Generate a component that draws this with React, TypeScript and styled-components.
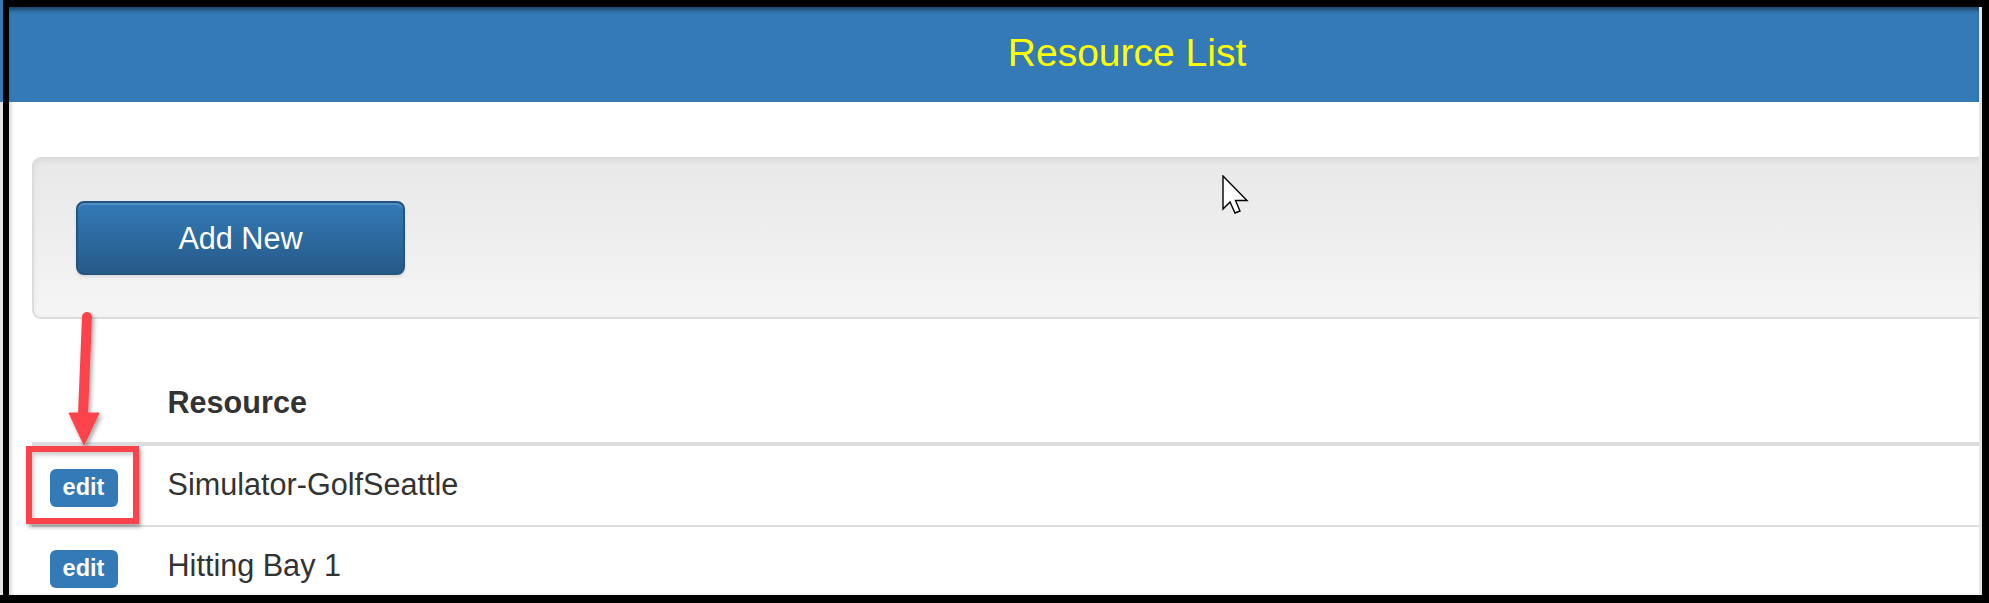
import React from "react";
import styled, { createGlobalStyle } from "styled-components";

const resources = ["Simulator-GolfSeattle", "Hitting Bay 1"];

const GlobalStyle = createGlobalStyle`
  html, body {
    margin: 0;
    padding: 0;
    background: #000;
  }
  body {
    font-family: "Liberation Sans", Arial, sans-serif;
    color: #333;
  }
`;

function App() {
  return (
    <>
      <GlobalStyle />
      <Frame>
        <Screen>
          <Header>
            <HeaderTitle>Resource List</HeaderTitle>
          </Header>
          <Content>
            <Well>
              <AddButton>Add New</AddButton>
            </Well>
            <Table>
              <Row $head>
                <Cell />
                <HeadCell>Resource</HeadCell>
              </Row>
              {resources.map((name) => (
                <Row key={name}>
                  <Cell>
                    <EditLabel>edit</EditLabel>
                  </Cell>
                  <Cell>{name}</Cell>
                </Row>
              ))}
            </Table>
          </Content>
          <CalloutArrow width="60" height="150" viewBox="0 0 60 150">
            <defs>
              <filter id="shade" x="-50%" y="-20%" width="200%" height="140%">
                <feDropShadow dx="2" dy="3" stdDeviation="2" floodColor="#000" floodOpacity="0.35" />
              </filter>
            </defs>
            <g filter="url(#shade)" fill="#fc434b" stroke="#fc434b">
              <path d="M28 10 L24 108" strokeWidth="10" strokeLinecap="round" fill="none" />
              <polygon points="10,106 40,106 25,138" strokeWidth="1" strokeLinejoin="round" />
            </g>
          </CalloutArrow>
          <CalloutBox />
          <Cursor width="28" height="40" viewBox="0 0 28 40">
            <polygon
              points="1,1 1,34 8,27 13,38 18,36 13.5,25.5 25,25.5"
              fill="#fff"
              stroke="#000"
              strokeWidth="1.4"
              strokeLinejoin="miter"
            />
          </Cursor>
        </Screen>
      </Frame>
    </>
  );
}

// black capture frame; a sliver of the captured page shows at the far left
const Frame = styled.div`
  box-sizing: border-box;
  width: 1989px;
  height: 603px;
  padding: 7px 7px 8px 9px;
  background:
    linear-gradient(#337ab7, #337ab7) 0 0 / 3px 102px no-repeat,
    linear-gradient(#e4e4e4, #e4e4e4) 0 102px / 3px 493px no-repeat,
    #000;
`;

const Screen = styled.div`
  position: relative;
  box-sizing: border-box;
  height: 588px;
  overflow: hidden;
  background: #fff;
  border-right: 3px solid #e6e6e6;
  box-shadow: inset 3px 0 3px rgba(0, 0, 0, 0.12);
`;

const Header = styled.div`
  display: flex;
  justify-content: center;
  align-items: center;
  height: 95px;
  padding-left: 266px;
  background: #337ab7;
  box-shadow: inset 0 5px 4px -2px rgba(0, 0, 0, 0.45);
`;

const HeaderTitle = styled.div`
  color: #ffff00;
  font-size: 39px;
  line-height: 1;
  margin-top: -4px;
`;

const Content = styled.div`
  padding: 55px 0 0 23px;
`;

const Well = styled.div`
  display: flex;
  align-items: center;
  height: 162px;
  box-sizing: border-box;
  margin-right: -20px;
  padding: 0 42px;
  border: 2px solid #dcdcdc;
  border-radius: 9px;
  background: linear-gradient(to bottom, #e8e8e8 0%, #f5f5f5 100%);
  box-shadow: inset 0 2px 6px rgba(0, 0, 0, 0.05);
`;

const AddButton = styled.button`
  box-sizing: border-box;
  width: 329px;
  height: 74px;
  border: 2px solid #245580;
  border-radius: 8px;
  background: linear-gradient(to bottom, #337ab7 0%, #265a88 100%);
  box-shadow: inset 0 2px 0 rgba(255, 255, 255, 0.15), 0 2px 3px rgba(0, 0, 0, 0.1);
  color: #fff;
  font-family: "Liberation Sans", Arial, sans-serif;
  font-size: 30.6px;
  padding: 0;
  cursor: pointer;
`;

const Table = styled.div`
  margin-top: 44px;
`;

const Row = styled.div<{ $head?: boolean }>`
  display: grid;
  grid-template-columns: 118px 1fr;
  border-bottom: ${(p) => (p.$head ? "4px" : "2px")} solid #dddddd;
`;

const Cell = styled.div`
  padding: 17.5px;
  font-size: 30.6px;
  line-height: 43.8px;
  white-space: nowrap;
`;

const HeadCell = styled(Cell)`
  font-weight: bold;
`;

const EditLabel = styled.span`
  display: inline-flex;
  align-items: center;
  justify-content: center;
  box-sizing: border-box;
  width: 68px;
  height: 38px;
  vertical-align: baseline;
  border-radius: 6px;
  background: #337ab7;
  color: #fff;
  font-weight: bold;
  font-size: 23.5px;
  line-height: 1;
`;

const CalloutArrow = styled.svg`
  position: absolute;
  left: 50px;
  top: 300px;
  overflow: visible;
`;

const CalloutBox = styled.div`
  position: absolute;
  left: 17px;
  top: 439px;
  width: 113px;
  height: 78px;
  box-sizing: border-box;
  border: 6px solid #fc434b;
  box-shadow: 2px 3px 4px rgba(0, 0, 0, 0.35), inset 2px 3px 4px rgba(0, 0, 0, 0.2);
`;

const Cursor = styled.svg`
  position: absolute;
  left: 1213px;
  top: 168px;
`;

export default App;
